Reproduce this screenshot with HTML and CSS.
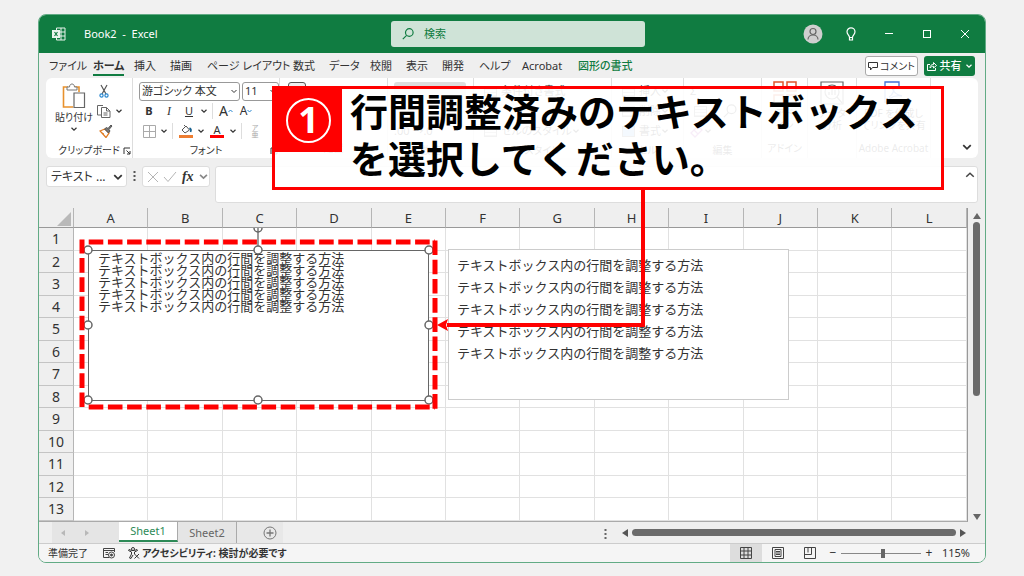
FILE: index.html
```html
<!DOCTYPE html>
<html lang="ja">
<head>
<meta charset="utf-8">
<title>Book2 - Excel</title>
<link rel="stylesheet" href="styles.css">
</head>
<body>
<svg class="defs" width="0" height="0" aria-hidden="true">
  <symbol id="chev" viewBox="0 0 8 8"><path d="M1.5 2.8 4 5.2 6.5 2.8" fill="none" stroke="currentColor" stroke-width="1.2"/></symbol>
  <symbol id="launch" viewBox="0 0 8 8"><path d="M1 7V1h6M3.5 3.5 7 7M7 4v3H4" fill="none" stroke="currentColor"/></symbol>
</svg>
<main class="window">
  <header class="titlebar">
    <div class="doc">
      <svg width="14" height="14" viewBox="0 0 14 14" fill="none" stroke="#e8f3ec"><path d="M4.500 3V1h8.500v12H4.500v-2M4.500 5H13M4.500 9H13M9 1v12"/><rect x=".5" y="3.500" width="7" height="7" fill="#e8f3ec"/><path d="m2.500 5 3 4M5.500 5l-3 4" stroke="#107c41" stroke-width="1.200"/></svg>
      <h1 class="doc-name">Book2&nbsp; -&nbsp; Excel</h1>
    </div>
    <label class="search">
      <svg width="12" height="12" viewBox="0 0 12 12" fill="none" stroke="#107c41" stroke-width="1.200"><circle cx="7.300" cy="4.500" r="3.800"/><path d="M4.600 7.400.8 11.200"/></svg>
      <input type="text" placeholder="検索" aria-label="検索">
    </label>
    <div class="win-controls">
      <button aria-label="アカウント"><svg width="20" height="20" viewBox="0 0 20 20"><circle cx="10" cy="10" r="9.500" fill="#cfcfcf"/><g fill="none" stroke="#666" stroke-width="1.200"><circle cx="10" cy="7.500" r="3"/><path d="M5 15.500c0-6 10-6 10 0"/></g></svg></button>
      <button aria-label="ヒント"><svg width="12" height="14" viewBox="0 0 12 14" fill="none" stroke="#fff" stroke-width="1.200"><path d="M4.500 10.500C4.500 8 2 7.500 2 4.800a4 4 0 0 1 8 0c0 2.700-2.500 3.200-2.500 5.700ZM4.500 10.500v2.500h3v-2.500"/></svg></button>
      <button aria-label="最小化"><svg width="10" height="10" viewBox="0 0 10 10" stroke="#fff"><path d="M1 4.500h8"/></svg></button>
      <button aria-label="最大化"><svg width="10" height="10" viewBox="0 0 10 10" fill="none" stroke="#fff"><rect x="1.500" y="1.500" width="7" height="7"/></svg></button>
      <button aria-label="閉じる"><svg width="10" height="10" viewBox="0 0 10 10" stroke="#fff"><path d="m1 1 8 8M9 1 1 9"/></svg></button>
    </div>
  </header>

  <div class="tabrow">
    <nav class="tabs">
      <a href="#">ファイル</a><a href="#" class="current">ホーム</a><a href="#">挿入</a><a href="#">描画</a><a href="#">ページ レイアウト</a><a href="#">数式</a><a href="#">データ</a><a href="#">校閲</a><a href="#">表示</a><a href="#">開発</a><a href="#">ヘルプ</a><a href="#">Acrobat</a><a href="#" class="context">図形の書式</a>
    </nav>
    <button class="comment"><svg width="10" height="10" viewBox="0 0 10 10" fill="none" stroke="#333"><path d="M.5 1.500h9v5H4.500L2.500 9V6.500h-2Z"/></svg>コメント</button>
    <button class="share"><svg width="10" height="10" viewBox="0 0 10 10" fill="none" stroke="#fff"><path d="M3 3.500H.500v6h8V7M3 7c0-2.500 1.500-3.500 3.500-3.500V1.500L9.500 4.500 6.500 7V5.300C5 5.300 4 5.800 3 7Z"/></svg>共有<svg width="8" height="8"><use href="#chev"/></svg></button>
  </div>

  <section class="ribbon">
    <div class="group clip">
      <div class="body">
        <button class="paste"><svg width="24" height="26" viewBox="0 0 24 26" fill="none"><path d="M6 4H1.500v20H11M17 9V4h-4" stroke="#e8912d" stroke-width="1.600"/><path d="M5 7V4h2.500c0-4 5-4 5 0H15v3Z" fill="#fff" stroke="#777"/><path d="M12 10h10.500v14.500H12Z" fill="#fff" stroke="#666" stroke-width="1.200"/></svg><span>貼り付け</span><svg width="8" height="8"><use href="#chev"/></svg></button>
        <div class="minis">
          <button aria-label="切り取り"><svg width="10" height="14" viewBox="0 0 10 14" fill="none"><path d="m2 1 5 9M8 1 3 10" stroke="#555" stroke-width="1.200"/><circle cx="2.500" cy="11.500" r="1.600" stroke="#2b88d0" stroke-width="1.200"/><circle cx="7.500" cy="11.500" r="1.600" stroke="#2b88d0" stroke-width="1.200"/></svg></button>
          <button class="copy" aria-label="コピー"><svg width="14" height="14" viewBox="0 0 14 14" fill="#fff" stroke="#666"><path d="M6 11H.500V1.500H6"/><path d="M4.500 3.500h5l3.500 3.500v6.500H4.500ZM9.500 3.500V7H13M6.500 9h4M6.500 11h4"/></svg><svg width="8" height="8"><use href="#chev"/></svg></button>
          <button aria-label="書式のコピー"><svg width="14" height="14" viewBox="0 0 14 14"><path d="m1 7 5-2 4 4-3 4.500Z" fill="#fff" stroke="#e07a1f" stroke-width="1.300"/><path d="m3 9 2 1-1 1" stroke="#e07a1f" fill="none"/><path d="m5.500 5 2-1.500 1.500 1L12 1l1 1-3 3.500 1 1.500L9.500 9Z" fill="#777" stroke="#555"/></svg></button>
        </div>
      </div>
      <div class="caption">クリップボード<svg width="8" height="8"><use href="#launch"/></svg></div>
    </div>
    <div class="group font">
      <div class="rows">
        <div class="row combos">
          <select class="family" aria-label="フォント"><option>游ゴシック 本文</option></select>
          <select class="size" aria-label="サイズ"><option>11</option></select>
        </div>
        <div class="row">
          <button class="b">B</button><button class="i">I</button><button class="u">U</button><svg width="10" height="8"><use href="#chev"/></svg><i class="sep"></i>
          <button class="big" aria-label="拡大">A<svg width="5" height="4" viewBox="0 0 5 4"><path d="M.5 3 2.500 1l2 2" fill="none" stroke="#2b88d0"/></svg></button><button class="mid" aria-label="縮小">A<svg width="5" height="4" viewBox="0 0 5 4"><path d="m.5 1 2 2 2-2" fill="none" stroke="#2b88d0"/></svg></button>
        </div>
        <div class="row">
          <button aria-label="罫線"><svg width="13" height="13" viewBox="0 0 13 13" fill="none" stroke="#aaa"><path d="M.5.5h12v12H.500ZM6.500.5v12M.5 6.500h12"/></svg></button><svg width="10" height="8"><use href="#chev"/></svg><i class="sep"></i>
          <button aria-label="塗りつぶし"><svg width="14" height="14" viewBox="0 0 14 14"><path d="m3 6 4-4 3.500 4L6 9ZM5 1l2 2" fill="#fff" stroke="#555"/><path d="M10.500 4c2 1 1.500 3 1 4" stroke="#17618f" stroke-width="1.600" fill="none"/><path d="M0 11h14v3H0Z" fill="#ed7d31"/></svg></button><svg width="10" height="8"><use href="#chev"/></svg>
          <button class="colour">A</button><svg width="10" height="8"><use href="#chev"/></svg><i class="sep"></i>
          <button class="ruby">ア<br>亜</button>
        </div>
      </div>
      <div class="caption">フォント<svg width="8" height="8"><use href="#launch"/></svg></div>
    </div>
    <div class="group align"><div class="rows"><div class="row"><span class="pressed small"></span></div></div><div class="caption">配置</div></div>
    <div class="group number"><div class="rows"><div class="row"><span class="pressed"></span></div><div class="row"></div><div class="row">.00 →.0</div></div><div class="caption">数値</div></div>
    <div class="group style"><div class="rows"><div class="row"><i class="tile"></i>条件付き書式</div><div class="row"><i class="tile"></i></div><div class="row"><i class="tile"></i>セルのスタイル<svg width="8" height="8"><use href="#chev"/></svg></div></div><div class="caption">スタイル</div></div>
    <div class="group cells"><div class="rows"><div class="row"><i class="tile"></i>挿入<svg width="8" height="8"><use href="#chev"/></svg></div><div class="row"><i class="tile"></i>削除<svg width="8" height="8"><use href="#chev"/></svg></div><div class="row"><i class="tile blue"></i>書式<svg width="8" height="8"><use href="#chev"/></svg></div></div><div class="caption">セル</div></div>
    <div class="group edit"><div class="rows"><div class="row">Σ</div><div class="row"><i class="tile"></i><svg class="lens" width="14" height="14" viewBox="0 0 12 12" fill="none" stroke="#555"><circle cx="7.300" cy="4.500" r="3.800"/><path d="M4.600 7.400.8 11.200"/></svg></div><div class="row"><svg width="14" height="14" viewBox="0 0 14 14" fill="none" stroke="#b04fb8" stroke-width="1.300"><path d="m1 9 7-7 4 4-7 7ZM4 6l4 4"/></svg><svg width="8" height="8"><use href="#chev"/></svg></div></div><div class="caption">編集</div></div>
    <div class="group addin"><div class="rows"><svg width="24" height="24" viewBox="0 0 24 24" fill="none" stroke="#e0562b" stroke-width="1.500"><path d="M1 1h9v9H1ZM14 1h9v9h-9ZM1 14h9v9H1ZM14 14h9v9h-9Z"/></svg><span>アド<br>イン</span></div><div class="caption">アドイン</div></div>
    <div class="group analyse"><div class="rows"><svg width="24" height="24" viewBox="0 0 24 24" fill="none" stroke="#666" stroke-width="1.200"><path d="M1 1h22v22H1Z"/><circle cx="12" cy="11" r="7"/><path d="M9 14v-3M12 14V7M15 14v-5M17 16l5 6"/></svg><span>データ<br>分析</span></div><div class="caption"></div></div>
    <div class="group acrobat"><div class="rows"><svg width="20" height="24" viewBox="0 0 20 24" fill="none" stroke="#3f6fd6" stroke-width="1.300"><path d="M15 8V1H1v20h9M5 16c4-2 6-8 4-10s-1 7 9 9c-4-1-9 0-13 3"/></svg><span>PDF を作成し<br>てリンクを共有</span></div><div class="caption">Adobe Acrobat</div></div>
    <button class="collapse" aria-label="リボンを折りたたむ"><svg width="12" height="12"><use href="#chev"/></svg></button>
  </section>

  <section class="formula-bar">
    <button class="name-box"><span>テキスト ...</span><svg width="12" height="12"><use href="#chev"/></svg></button>
    <svg class="grip" width="3" height="10" viewBox="0 0 3 10" fill="#555"><path d="M.5 0h2v2h-2ZM.5 4h2v2h-2ZM.5 8h2v2h-2Z"/></svg>
    <div class="fx">
      <button aria-label="キャンセル"><svg width="12" height="12" viewBox="0 0 12 12" stroke="#b5b5b5"><path d="m1 1 10 10M11 1 1 11"/></svg></button>
      <button aria-label="入力"><svg width="14" height="12" viewBox="0 0 14 12" fill="none" stroke="#b5b5b5"><path d="m1 6 4 4.500L13 1"/></svg></button>
      <button class="fn">fx</button><svg class="pale" width="11" height="11"><use href="#chev"/></svg>
    </div>
    <div class="formula"><textarea aria-label="数式バー"></textarea><svg width="12" height="12" viewBox="0 0 8 8"><path d="M1.500 5.200 4 2.800l2.500 2.400" fill="none" stroke="#444"/></svg></div>
  </section>

  <section class="sheet">
    <table class="grid">
      <thead><tr><th class="corner"><svg width="14" height="14" viewBox="0 0 14 14"><path d="M14 0v14H0Z" fill="#b9b9b9"/></svg></th><th>A</th><th>B</th><th>C</th><th>D</th><th>E</th><th>F</th><th>G</th><th>H</th><th>I</th><th>J</th><th>K</th><th>L</th></tr></thead>
      <tbody>
        <tr><th>1</th><td><td><td><td><td><td><td><td><td><td><td><td></tr>
        <tr><th>2</th><td><td><td><td><td><td><td><td><td><td><td><td></tr>
        <tr><th>3</th><td><td><td><td><td><td><td><td><td><td><td><td></tr>
        <tr><th>4</th><td><td><td><td><td><td><td><td><td><td><td><td></tr>
        <tr><th>5</th><td><td><td><td><td><td><td><td><td><td><td><td></tr>
        <tr><th>6</th><td><td><td><td><td><td><td><td><td><td><td><td></tr>
        <tr><th>7</th><td><td><td><td><td><td><td><td><td><td><td><td></tr>
        <tr><th>8</th><td><td><td><td><td><td><td><td><td><td><td><td></tr>
        <tr><th>9</th><td><td><td><td><td><td><td><td><td><td><td><td></tr>
        <tr><th>10</th><td><td><td><td><td><td><td><td><td><td><td><td></tr>
        <tr><th>11</th><td><td><td><td><td><td><td><td><td><td><td><td></tr>
        <tr><th>12</th><td><td><td><td><td><td><td><td><td><td><td><td></tr>
        <tr><th>13</th><td><td><td><td><td><td><td><td><td><td><td><td></tr>
      </tbody>
    </table>
    <div class="vscroll"><svg width="8" height="6" viewBox="0 0 8 6"><path d="m4 0 4 6H0Z" fill="#666"/></svg><i class="vthumb"></i><svg width="8" height="6" viewBox="0 0 8 6"><path d="m4 6 4-6H0Z" fill="#666"/></svg></div>

    <div class="textbox loose">
      <p>テキストボックス内の行間を調整する方法</p><p>テキストボックス内の行間を調整する方法</p><p>テキストボックス内の行間を調整する方法</p><p>テキストボックス内の行間を調整する方法</p><p>テキストボックス内の行間を調整する方法</p>
    </div>
    <div class="textbox tight">
      <p>テキストボックス内の行間を調整する方法</p><p>テキストボックス内の行間を調整する方法</p><p>テキストボックス内の行間を調整する方法</p><p>テキストボックス内の行間を調整する方法</p><p>テキストボックス内の行間を調整する方法</p>
    </div>
    <svg class="handles" width="360" height="190" viewBox="0 0 360 190" fill="#fff" stroke="#666" stroke-width="1.500">
      <path d="M179 0v22" stroke-width="1.300"/><path d="M175 0a4 4 0 0 0 8 0" fill="none"/>
      <circle cx="9" cy="22" r="4"/><circle cx="179" cy="22" r="4"/><circle cx="350" cy="22" r="4"/>
      <circle cx="9" cy="97" r="4"/><circle cx="350" cy="97" r="4"/>
      <circle cx="9" cy="172" r="4"/><circle cx="179" cy="172" r="4"/><circle cx="350" cy="172" r="4"/>
    </svg>
  </section>

  <div class="sheetbar">
    <div class="sheet-nav"><svg width="5" height="8" viewBox="0 0 5 8"><path d="M4 1v6L0 4Z" fill="#b8b8b8"/></svg><svg width="5" height="8" viewBox="0 0 5 8"><path d="M1 1v6l4-3Z" fill="#b8b8b8"/></svg></div>
    <button class="sheet-tab active">Sheet1</button>
    <button class="sheet-tab">Sheet2</button>
    <button class="add" aria-label="新しいシート"><svg width="14" height="14" viewBox="0 0 14 14" fill="none" stroke="#777"><circle cx="7" cy="7" r="6"/><path d="M7 3.500v7M3.500 7h7" stroke-width="1.300"/></svg></button>
    <svg class="grip" width="3" height="10" viewBox="0 0 3 10" fill="#666"><path d="M.5 0h2v2h-2ZM.5 4h2v2h-2ZM.5 8h2v2h-2Z"/></svg>
    <div class="hscroll"><svg width="6" height="8" viewBox="0 0 6 8"><path d="M6 0v8L0 4Z" fill="#555"/></svg><i class="hthumb"></i><svg width="6" height="8" viewBox="0 0 6 8"><path d="M0 0v8l6-4Z" fill="#555"/></svg></div>
  </div>

  <footer class="status">
    <span>準備完了</span>
    <svg width="13" height="11" viewBox="0 0 13 11" fill="none" stroke="#444"><path d="M6 9.500H.500v-9h11V4M.5 2.500h11M2.500 4.500H5M2.500 6.500H5"/><circle cx="8.500" cy="7" r="3"/><circle cx="8.500" cy="7" r="1" fill="#444"/></svg>
    <svg class="person" width="12" height="12" viewBox="0 0 12 12" fill="none" stroke="#333"><circle cx="5" cy="2" r="1.500"/><path d="M.5 3.500 3.500 5v2L1.500 11l1.500.5L5 8M9.500 3.500 6.500 5v2M.5 3.500 1 2.500l2.500 1h3L9 2.500l.5 1M6.500 7l4.500 4.500M11 7l-4.500 4.500"/></svg>
    <strong>アクセシビリティ: 検討が必要です</strong>
    <div class="views">
      <button class="on" aria-label="標準"><svg width="12" height="12" viewBox="0 0 12 12" fill="none" stroke="#444"><path d="M.5.5h11v11H.500ZM.5 4h11M.5 8h11M4 .5v11M8 .5v11"/></svg></button>
      <button aria-label="ページ レイアウト"><svg width="12" height="12" viewBox="0 0 12 12" fill="none" stroke="#444"><path d="M.5.5h11v11H.500ZM3 2.500h6v7H3ZM4 4.500h4M4 6h4M4 7.500h4"/></svg></button>
      <button aria-label="改ページ"><svg width="12" height="12" viewBox="0 0 12 12" fill="none" stroke="#444"><path d="M.5.5h11v11H.500ZM.5 7.500h7V.5M4 .5v5"/></svg></button>
    </div>
    <button class="zoom-btn">−</button><input class="zoom" type="range" min="10" max="190" value="105" aria-label="ズーム"><button class="zoom-btn">+</button>
    <span class="percent">115%</span>
  </footer>

  <svg class="marks" fill="none" stroke="#f00" aria-hidden="true">
    <g stroke-width="5" stroke-dasharray="14.600 4.600">
      <path d="M49.700 227H396"/><path d="M49.700 392H396"/>
      <path d="M43 224.500V393" stroke-dashoffset=".6"/><path d="M396 225.500V394"/>
    </g>
    <path d="M604 174v136H408" stroke-width="4"/>
    <path d="m398 310 11-6-2 6 2 6Z" fill="#f00" stroke="none"/>
  </svg>
  <aside class="callout">
    <div class="badge"><span>1</span></div>
    <p>行間調整済みのテキストボックス<br>を選択してください。</p>
  </aside>
</main>
</body>
</html>
```
FILE: styles.css
```css
* { box-sizing: border-box; }
body {
  margin: 0;
  min-height: 100vh;
  padding: 14px 38px;
  background: #f1f1f1;
  color: #333;
  font: 11px/16px "Noto Sans", "Noto Sans CJK JP", sans-serif;
  font-feature-settings: "palt";
}
button, input, select, textarea { font: inherit; font-feature-settings: inherit; color: inherit; border: 0; padding: 0; margin: 0; background: none; }
a { color: inherit; text-decoration: none; }
p, h1 { margin: 0; }
svg { flex: none; }
button { display: flex; align-items: center; justify-content: center; white-space: nowrap; }
.defs { position: absolute; }

.window { position: relative; border: 1px solid #62ab85; border-radius: 8px; overflow: hidden; background: #efefef; }

.titlebar { display: grid; grid-template-columns: 352px minmax(0, 254px) 1fr; align-items: center; height: 38px; background: #107c41; color: #fff; }
.doc { display: flex; align-items: center; gap: 18px; padding-left: 13px; }
.doc-name { font-size: 11px; font-weight: 400; }
.search { display: flex; align-items: center; gap: 10px; height: 26px; padding-left: 11px; border-radius: 3px; background: #cfe3d7; color: #107c41; }
.search input { flex: 1; min-width: 0; }
.search input::placeholder { color: #107c41; opacity: 1; }
.win-controls { display: flex; justify-content: flex-end; padding-right: 1px; }
.win-controls button { width: 38px; height: 26px; }

.tabrow { display: flex; align-items: center; height: 25px; padding: 0 10px; gap: 6px; }
.tabs { flex: 1; display: grid; grid-template-columns: 44px 41px 36px 37px 86px 36px 41px 36px 36px 37px 43px 56px auto; justify-items: start; white-space: nowrap; }
.tabs a { height: 21px; line-height: 22px; }
.tabs .current { font-weight: 700; border-bottom: 2px solid #107c41; }
.tabs .context { color: #107c41; font-weight: 500; }
.comment, .share { height: 20px; gap: 2px; border-radius: 3px; }
.comment { width: 53px; background: #fff; border: 1px solid #aaa; font-size: 10px; }
.share { width: 51px; gap: 3px; background: #107c41; color: #fff; font-weight: 500; }

.ribbon { display: flex; height: 80px; margin: 0 7px; background: #fff; border-radius: 6px; }
.group { display: flex; flex-direction: column; flex: none; padding: 3px 0 0 6px; border-right: 1px solid #ddd; white-space: nowrap; overflow: hidden; }
.clip { width: 87px; }
.font { width: 147px; }
.align { width: 108px; }
.number { width: 86px; }
.style { width: 138px; }
.cells { width: 72px; }
.edit { width: 78px; }
.addin { width: 46px; }
.analyse { width: 49px; }
.acrobat { width: 74px; padding-left: 0; }
.acrobat .rows, .acrobat .caption { padding-right: 0; }
.rows, .body { flex: 1; }
.body { display: flex; }
.row { display: flex; align-items: center; height: 20px; }
.row button { width: 20px; height: 18px; }
.caption { display: flex; justify-content: center; align-items: center; position: relative; height: 20px; padding-right: 6px; font-size: 10px; }
.caption svg { position: absolute; right: 1px; top: 6px; }
.paste { flex-direction: column; justify-content: flex-start; width: 44px; padding: 2px 0 0 0; font-size: 10px; }
.minis { display: grid; grid-template-rows: 20px 20px 20px; }
.minis button { justify-content: flex-start; gap: 4px; padding-left: 3px; }
.minis .copy { padding-left: 1px; }
.combos { gap: 2px; }
.combos select {
  appearance: none; height: 19px; border: 1px solid #999; border-radius: 3px; padding-left: 2px;
  background: #fff url("data:image/svg+xml,%3Csvg xmlns='http://www.w3.org/2000/svg' width='8' height='8'%3E%3Cpath d='M1.500 3 4 5.500 6.500 3' fill='none' stroke='%23333'/%3E%3C/svg%3E") no-repeat right 1px center;
}
.family { width: 101px; }
.size { width: 37px; }
.b { font-weight: 700; }
.i { font-family: "Liberation Serif", serif; font-style: italic; font-size: 12px; }
.u { text-decoration: underline; }
.big { font-size: 14px; }
.mid { font-size: 12px; }
.row button svg { align-self: flex-start; }
.row button svg:only-child { align-self: center; }
.sep { width: 1px; height: 16px; margin: 0 3px; background: #ddd; }
.row .colour { width: 14px; height: 14px; margin: 0 4px; border-bottom: 3px solid #f00; }
.row .ruby { font-size: 7px; line-height: 7px; color: #aaa; }
.pressed { width: 72px; height: 18px; background: #ddd; border-radius: 3px; }
.pressed.small { width: 18px; margin-left: 2px; border: 1px solid #555; background: #eee; }
.tile { width: 13px; height: 11px; margin: 0 4px; border: 1px solid #888; background: repeating-linear-gradient(#fff 0 2px, #bbb 2px 3px); }
.tile.blue { background: #8cc4f0; }
.lens { margin-left: 12px; }
.addin .rows, .analyse .rows, .acrobat .rows { display: flex; flex-direction: column; align-items: center; text-align: center; font-size: 10px; line-height: 12px; gap: 2px; }
.addin .rows, .analyse .rows { padding-right: 6px; }
.collapse { flex: 1; align-items: flex-end; justify-content: flex-end; padding: 0 5px 5px 0; }

.formula-bar { display: flex; gap: 5px; height: 50px; padding: 8px 7px 5px; }
.name-box, .fx { height: 21px; background: #fff; border: 1px solid #ddd; border-radius: 3px; }
.name-box { justify-content: space-between; width: 81px; padding: 0 2px 0 4px; font-size: 12px; }
.formula-bar .grip { margin: 5px 1px 0; }
.fx { display: flex; align-items: center; justify-content: space-between; width: 68px; padding: 0 0 0 4px; }
.fn { font-family: "Liberation Serif", serif; font-style: italic; font-weight: 700; font-size: 14px; }
.pale { color: #888; }
.formula { flex: 1; display: flex; background: #fff; border: 1px solid #ddd; border-radius: 3px; }
.formula textarea { flex: 1; resize: none; }
.formula svg { margin: 2px 1px; }

.sheet { position: relative; display: grid; grid-template-columns: minmax(0, 1fr) 17px; }
.grid { width: 100%; table-layout: fixed; border-collapse: separate; border-spacing: 0; background: #fff; border-right: 1px solid #999; border-bottom: 1px solid #aaa; }
.grid th, .grid td { padding: 0; height: 22px; }
.grid td { border-right: 1px solid #e1e1e1; border-bottom: 1px solid #e1e1e1; }
.grid tbody tr:nth-child(odd) > * { height: 23px; }
.grid th { background: #efefef; border-right: 1px solid #b5b5b5; border-bottom: 1px solid #c4c4c4; font-weight: 400; font-size: 14px; line-height: 18px; }
.grid thead th { height: 20px; border-bottom-color: #999; font-size: 13px; }
.grid .corner { width: 35px; padding: 3px 2px 0 0; line-height: 0; text-align: right; }
.vscroll { display: flex; flex-direction: column; align-items: center; padding: 5px 0 2px; gap: 3px; }
.vthumb { flex: 0 1 174px; width: 7px; margin-bottom: auto; border-radius: 4px; background: #6b6b6b; }

/* Shapes placed freely on the worksheet */
.textbox { position: absolute; width: 341px; height: 151px; background: #fff; font-size: 13px; font-feature-settings: normal; white-space: nowrap; }
.tight { left: 49px; top: 42px; padding: 1px 9px; border: 1px solid #666; line-height: 12px; }
.loose { left: 409px; top: 41px; padding: 4px 8px; border: 1px solid #ccc; line-height: 22px; }
.handles { position: absolute; left: 40px; top: 20px; }

.sheetbar { display: flex; align-items: stretch; height: 22px; border-bottom: 1px solid #ccc; font-size: 11px; }
.sheet-nav { display: flex; align-items: center; gap: 18px; width: 67px; margin-left: 13px; padding-left: 9px; background: #e5e5e5; }
.sheet-tab { width: 59px; border-right: 1px solid #aaa; background: #e5e5e5; color: #666; }
.sheet-tab.active { background: #fff; color: #2d8a57; border-bottom: 2px solid #2d8a57; height: 20px; }
.add { width: 46px; padding-left: 19px; background: #e8e8e8; }
.sheetbar .grip { margin: 7px 15px 0 auto; }
.hscroll { display: flex; align-items: center; gap: 4px; flex: 0 1 344px; margin-right: 19px; }
.hthumb { flex: 1; height: 7px; border-radius: 4px; background: #6b6b6b; }

.status { display: flex; align-items: center; height: 18px; padding: 0 15px 0 9px; background: #f5f5f5; font-size: 10px; white-space: nowrap; }
.status > svg { margin-left: 15px; }
.status > .person { margin: 0 2px 0 12px; }
.views { display: flex; align-self: stretch; margin-left: auto; }
.views button { width: 32px; }
.views .on { background: #ddd; }
.zoom-btn { width: 14px; font-size: 12px; }
.zoom { appearance: none; width: 80px; height: 12px; margin: 0 1px; background: linear-gradient(#888, #888) center / 100% 1px no-repeat; }
.zoom::-webkit-slider-thumb { appearance: none; width: 4px; height: 9px; background: #666; }
.percent { margin-left: 6px; font-size: 11px; }

/* Tutorial annotations laid over the window */
.marks { position: absolute; inset: 0; width: 100%; height: 100%; pointer-events: none; }
.callout { position: absolute; left: 233px; top: 71px; display: flex; gap: 8px; width: 672px; height: 104px; border: 3px solid #f00; background: rgba(255, 255, 255, .9); color: #000; font: 700 38px/47px "Noto Sans CJK JP", sans-serif; font-feature-settings: normal; white-space: nowrap; }
.callout p { margin-top: -3px; }
.badge { display: flex; align-items: center; justify-content: center; width: 67px; height: 63px; background: #f00; }
.badge span { width: 45px; height: 45px; border: 2px solid #fff; border-radius: 50%; color: #fff; text-align: center; font: 700 36px/40px "Noto Sans", sans-serif; }
```
